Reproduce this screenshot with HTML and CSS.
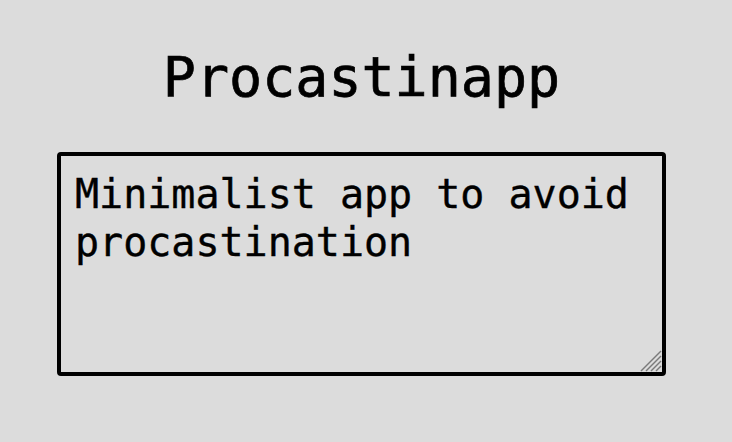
FILE: index.html
```html
<!DOCTYPE html>
<html lang="en">
<head>
<meta charset="utf-8">
<title>Procastinapp</title>
<link rel="stylesheet" href="styles.css">
</head>
<body>
<main class="app">
  <h1 class="title">Procastinapp</h1>
  <div class="note-wrap">
    <textarea class="note">Minimalist app to avoid procastination</textarea>
    <svg class="grip" width="22" height="22" viewBox="0 0 22 22" aria-hidden="true">
      <line x1="1" y1="21" x2="21" y2="1"/>
      <line x1="6" y1="21" x2="21" y2="6"/>
      <line x1="11" y1="21" x2="21" y2="11"/>
      <line x1="16" y1="21" x2="21" y2="16"/>
    </svg>
  </div>
</main>
</body>
</html>
```

FILE: styles.css
```css
html, body {
  margin: 0;
  padding: 0;
  background: #dcdcdc;
}
.app {
  display: flex;
  flex-direction: column;
  align-items: center;
  padding-right: 9px;
  font-family: "DejaVu Sans Mono", "Liberation Mono", monospace;
  color: #000;
}
.title {
  margin: 45px 0 43px;
  font-size: 55px;
  line-height: 64px;
  font-weight: normal;
  -webkit-text-stroke: 0.7px #000;
}
.note-wrap {
  position: relative;
  width: 609px;
  height: 224px;
}
.note {
  display: block;
  box-sizing: border-box;
  width: 100%;
  height: 100%;
  margin: 0;
  padding: 14px 12px 14px 14px;
  border: 4px solid #000;
  border-radius: 4px;
  background: #dcdcdc;
  color: #000;
  font-family: "DejaVu Sans Mono", "Liberation Mono", monospace;
  font-size: 40px;
  line-height: 48px;
  -webkit-text-stroke: 0.4px #000;
  outline: none;
  resize: none;
}
.grip {
  position: absolute;
  right: 4px;
  bottom: 4px;
  pointer-events: none;
}
.grip line {
  stroke: #7a7a7a;
  stroke-width: 1.5;
}
```
